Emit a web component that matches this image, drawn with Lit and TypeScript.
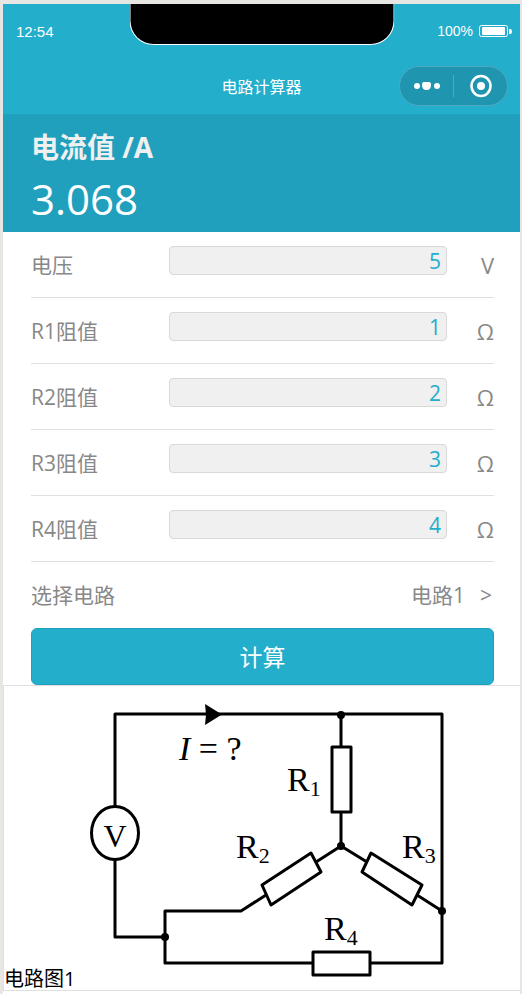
import { LitElement, html, css, svg } from "lit";
import { customElement, state } from "lit/decorators.js";

const FONT = css`"Open Sans", "Noto Sans CJK SC", sans-serif`;

@customElement("status-header")
class StatusHeader extends LitElement {
  static styles = css`
    :host {
      display: block;
      position: relative;
      background: #23aecc;
      color: #fff;
      font-family: "Liberation Sans", "Noto Sans CJK SC", sans-serif;
    }
    .notch {
      position: absolute;
      top: 0;
      left: 50%;
      width: 263px;
      height: 40px;
      transform: translateX(-50%);
      background: #000;
      border: 1px solid #fff;
      border-top: 0;
      border-radius: 0 0 24px 24px;
    }
    .status {
      display: flex;
      justify-content: space-between;
      align-items: center;
      height: 54px;
      padding: 0 8px 0 13px;
    }
    .time {
      font-size: 15px;
    }
    .power {
      display: flex;
      align-items: center;
      gap: 6px;
      font-size: 14px;
    }
    .bar {
      display: grid;
      grid-template-columns: 1fr auto 1fr;
      align-items: center;
      height: 56px;
      padding: 0 12px;
    }
    .title {
      grid-column: 2;
      margin: 0;
      padding-top: 4px;
      font-size: 16px;
      font-weight: 400;
      line-height: 24px;
    }
    .capsule {
      justify-self: end;
      display: flex;
      align-items: center;
      box-sizing: border-box;
      width: 109px;
      height: 40px;
      border: 1px solid #4fa9bf;
      border-radius: 20px;
      background: #1f95b0;
    }
    .capsule button {
      flex: 1;
      display: flex;
      justify-content: center;
      align-items: center;
      height: 100%;
      padding: 0;
      border: 0;
      background: none;
      color: inherit;
    }
    .split {
      width: 1px;
      height: 22px;
      background: #4fa9bf;
    }
  `;

  render() {
    return html`
      <div class="notch"></div>
      <div class="status">
        <span class="time">12:54</span>
        <span class="power">
          100%
          <svg width="33" height="12" viewBox="0 0 33 12" aria-hidden="true">
            <rect x="0.5" y="0.5" width="28" height="11" rx="2" fill="none" stroke="#fff" />
            <rect x="3" y="2" width="23" height="8" rx="1" fill="#fff" />
            <path d="M30 4h2q2 2.500 0 5H30z" fill="#fff" />
          </svg>
        </span>
      </div>
      <div class="bar">
        <h1 class="title">电路计算器</h1>
        <div class="capsule">
          <button aria-label="更多">
            <svg width="28" height="10" viewBox="0 0 28 10" fill="#fff">
              <circle cx="4" cy="5" r="3" />
              <path d="M9 4Q9 1 11 1h5q2 0 2 3 0 5-4.500 5T9 4z" />
              <circle cx="24" cy="5" r="3" />
            </svg>
          </button>
          <span class="split"></span>
          <button aria-label="关闭">
            <svg width="22" height="24" viewBox="0 0 22 24">
              <ellipse cx="11" cy="12" rx="9.500" ry="10" fill="none" stroke="#fff" stroke-width="2.500" />
              <circle cx="11" cy="12" r="4" fill="#fff" />
            </svg>
          </button>
        </div>
      </div>
    `;
  }
}

@customElement("circuit-diagram")
class CircuitDiagram extends LitElement {
  static styles = css`
    :host {
      display: block;
    }
    .drawing {
      display: block;
      width: 100%;
      height: auto;
      font-family: "Liberation Serif", serif;
      font-size: 34px;
    }
    .wire {
      fill: none;
      stroke: #000;
      stroke-width: 3px;
      stroke-linejoin: round;
      stroke-linecap: round;
    }
    .part {
      fill: #fff;
      stroke: #000;
      stroke-width: 3px;
      stroke-linejoin: round;
    }
    .sub {
      font-size: 22px;
    }
    .volt {
      font-size: 32px;
      text-anchor: middle;
    }
    .italic {
      font-style: italic;
    }
  `;

  private label(n: number, x: number, y: number) {
    return svg`<text x=${x} y=${y}>R<tspan class="sub" dy="5">${n}</tspan></text>`;
  }

  render() {
    return html`
      <svg class="drawing" viewBox="0 0 516 304" role="img" aria-label="电路图1">
        <path
          class="wire"
          d="M111 121V28H438V277H161V225H237L262 209M111 174V251H161M337 28V160L312 176M337 160L363 176M413 209L438 225"
        />
        <path d="M201 18L218 28.500L201 39L202 28.500z" />
        <circle cx="337" cy="29" r="4" />
        <circle cx="337" cy="160" r="4" />
        <circle cx="438" cy="225" r="4" />
        <circle cx="161" cy="251" r="4" />
        <ellipse class="part" cx="111" cy="147" rx="23.500" ry="26.500" />
        <rect class="part" x="328" y="61" width="19" height="65" />
        <path class="part" d="M307 167L317 186L267 219L258 199z" />
        <path class="part" d="M367 167L358 186L408 219L418 199z" />
        <rect class="part" x="309" y="266" width="57" height="23" />
        <text class="volt" x="111" y="161">V</text>
        <text x="175" y="74"><tspan class="italic">I</tspan> = ?</text>
        ${this.label(1, 283, 105)} ${this.label(2, 232, 172)}
        ${this.label(3, 398, 172)} ${this.label(4, 320, 254)}
      </svg>
    `;
  }
}

@customElement("app-root")
class AppRoot extends LitElement {
  static styles = css`
    :host {
      display: block;
      box-sizing: border-box;
      min-height: 100vh;
      padding: 4px 2px 0 3px;
      background: #e8e6e2;
      font-family: ${FONT};
      color: #888;
    }
    .page {
      min-height: calc(100vh - 4px);
      background: #fff;
    }
    .result {
      box-sizing: border-box;
      height: 118px;
      padding: 14px 28px 0;
      background: #20a0bc;
      color: #fff;
    }
    .caption {
      margin: 0;
      font-size: 28px;
      line-height: 38px;
      font-weight: 700;
      color: #f0f0f0;
    }
    .value {
      display: block;
      font-size: 42px;
      line-height: 66px;
    }
    .form {
      padding: 0 26px 0 28px;
      font-size: 21px;
      line-height: 30px;
    }
    .row {
      display: flex;
      align-items: center;
      box-sizing: border-box;
      height: 66px;
      border-bottom: 1px solid #e0e0e0;
    }
    .row:last-of-type {
      border-bottom: 0;
    }
    .name {
      width: 138px;
    }
    .field {
      flex: 1;
      align-self: flex-start;
      min-width: 0;
      box-sizing: border-box;
      height: 29px;
      margin: 14px 0 0;
      padding: 0 5px;
      border: 1px solid #d9d9d9;
      border-radius: 4px;
      background: #f0f0f0;
      color: #23aecc;
      font: inherit;
      line-height: 27px;
      text-align: right;
      outline: none;
    }
    .unit {
      width: 47px;
      font-size: 22px;
      text-align: right;
    }
    .choice {
      margin-left: auto;
      padding: 0;
      border: 0;
      appearance: none;
      background: none;
      color: inherit;
      font: inherit;
    }
    .more {
      box-sizing: border-box;
      width: 28px;
      padding-right: 2px;
      text-align: right;
    }
    .submit {
      display: block;
      box-sizing: border-box;
      width: 100%;
      height: 57px;
      padding: 0;
      border: 1px solid #20a0bc;
      border-radius: 6px;
      background: #23aecc;
      color: #fff;
      font: inherit;
      font-size: 23px;
    }
    .figure {
      position: relative;
      margin: 0;
      border: 1px solid #e0e0e0;
      border-right: 0;
    }
    .note {
      position: absolute;
      left: 0;
      bottom: 0;
      color: #000;
      font-size: 20px;
      line-height: 22px;
    }
  `;

  @state() private values = [5, 1, 2, 3, 4];
  @state() private current = "3.068";

  private edit(i: number, e: Event) {
    const next = Number((e.target as HTMLInputElement).value);
    this.values = this.values.map((v, k) => (k === i ? next : v));
  }

  // R1 and R3 in parallel, in series with R2, all in parallel with R4.
  private calculate() {
    const [u, r1, r2, r3, r4] = this.values;
    const branch = (r1 * r3) / (r1 + r3) + r2;
    this.current = (u / ((branch * r4) / (branch + r4))).toFixed(3);
  }

  render() {
    const names = ["电压", "R1阻值", "R2阻值", "R3阻值", "R4阻值"];
    return html`
      <main class="page">
        <status-header></status-header>
        <section class="result">
          <h2 class="caption">电流值 /A</h2>
          <output class="value">${this.current}</output>
        </section>
        <section class="form">
          ${names.map(
            (name, i) => html`
              <div class="row">
                <label class="name" for="f${i}">${name}</label>
                <input
                  class="field"
                  id="f${i}"
                  inputmode="decimal"
                  .value=${String(this.values[i])}
                  @input=${(e: Event) => this.edit(i, e)}
                />
                <span class="unit">${i === 0 ? "V" : "Ω"}</span>
              </div>
            `
          )}
          <div class="row">
            <label class="name" for="circuit">选择电路</label>
            <select class="choice" id="circuit">
              <option>电路1</option>
            </select>
            <span class="more">&gt;</span>
          </div>
          <button class="submit" @click=${this.calculate}>计算</button>
        </section>
        <figure class="figure">
          <circuit-diagram></circuit-diagram>
          <figcaption class="note">电路图1</figcaption>
        </figure>
      </main>
    `;
  }
}
